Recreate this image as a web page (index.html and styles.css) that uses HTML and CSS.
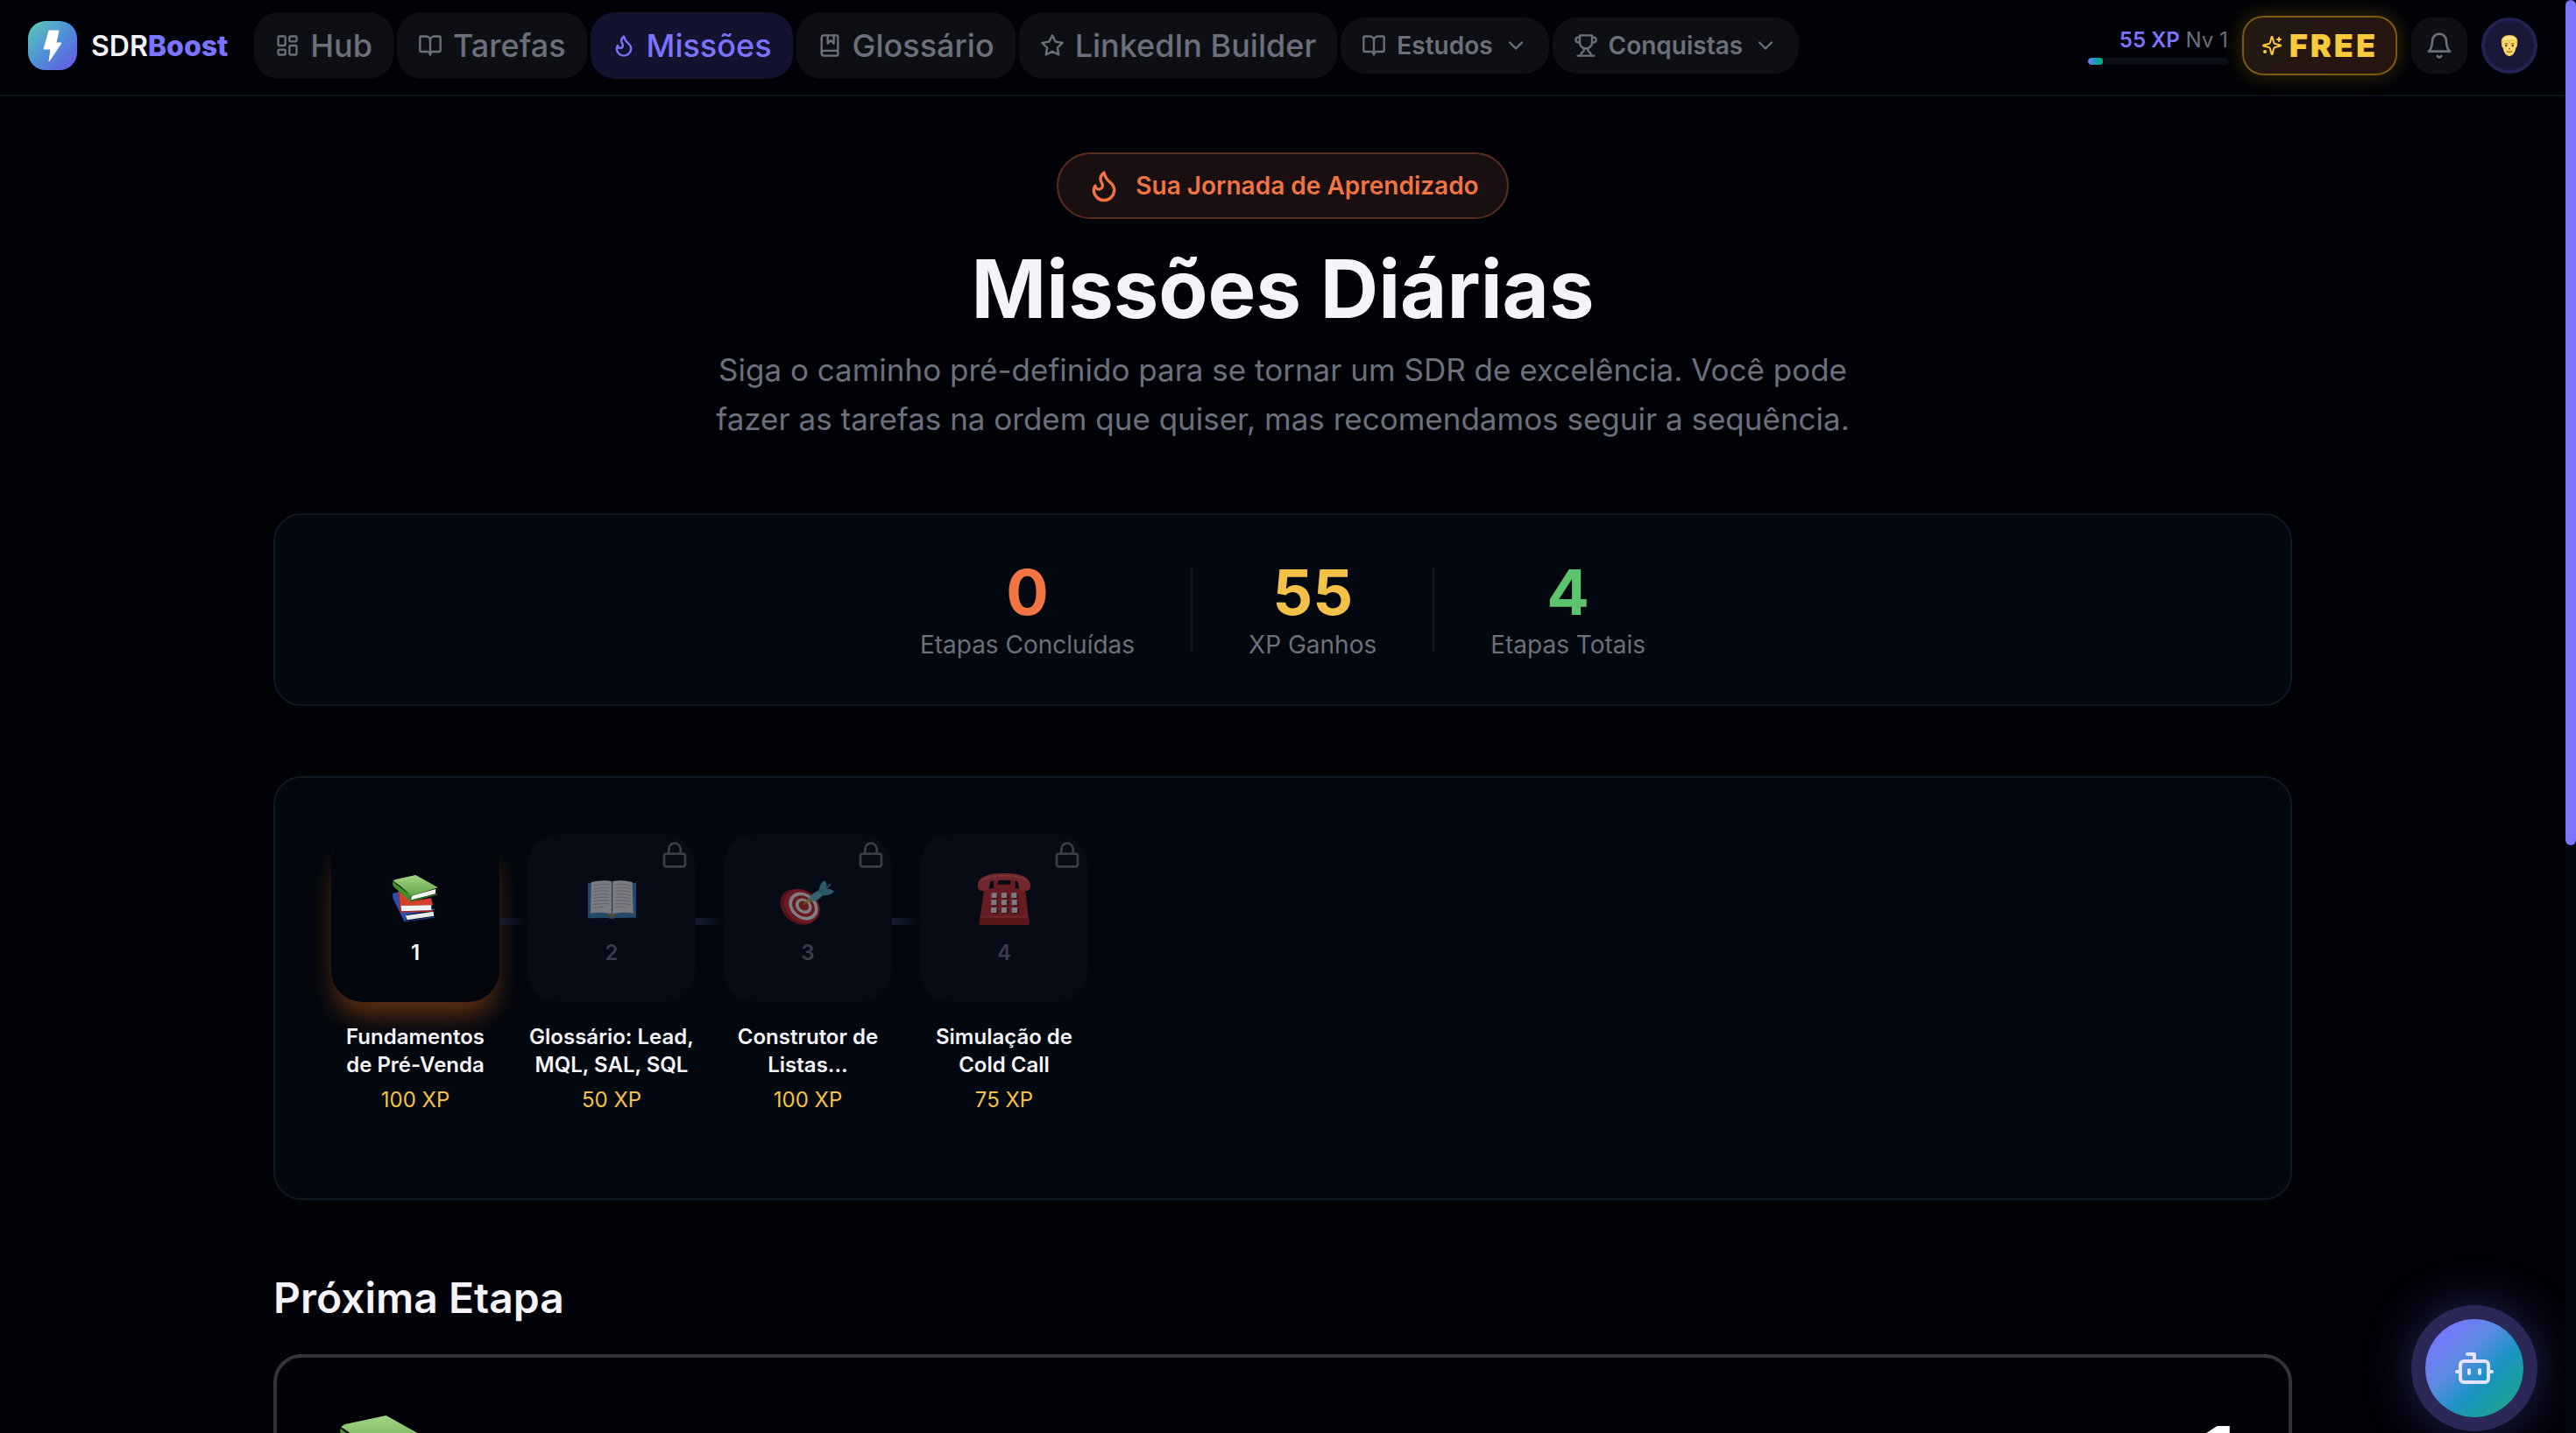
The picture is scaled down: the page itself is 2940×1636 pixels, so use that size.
FILE: index.html
```html
<!DOCTYPE html>
<html lang="pt-BR">
<head>
  <meta charset="UTF-8">
  <meta name="viewport" content="width=device-width, initial-scale=1">
  <title>SDRBoost</title>
  <link rel="stylesheet" href="styles.css">
</head>
<body>
  <!-- Shared icons -->
  <svg class="sprite" aria-hidden="true">
    <symbol id="i-book" viewBox="0 0 24 24"><path d="M12 7v14"/><path d="M3 18a1 1 0 0 1-1-1V4a1 1 0 0 1 1-1h5a4 4 0 0 1 4 4 4 4 0 0 1 4-4h5a1 1 0 0 1 1 1v13a1 1 0 0 1-1 1h-6a3 3 0 0 0-3 3 3 3 0 0 0-3-3z"/></symbol>
    <symbol id="i-flame" viewBox="0 0 24 24"><path d="M8.5 14.5A2.5 2.5 0 0 0 11 12c0-1.38-.5-2-1-3-1.072-2.143-.224-4.054 2-6 .5 2.5 2 4.9 4 6.5 2 1.6 3 3.5 3 5.5a7 7 0 1 1-14 0c0-1.153.433-2.294 1-3a2.5 2.5 0 0 0 2.5 2.5z"/></symbol>
    <symbol id="i-chevron" viewBox="0 0 24 24"><path d="m6 9 6 6 6-6"/></symbol>
    <symbol id="i-lock" viewBox="0 0 24 24"><rect x="3" y="11" width="18" height="11" rx="2"/><path d="M7 11V7a5 5 0 0 1 10 0v4"/></symbol>
    <symbol id="e-books" viewBox="432 348 180 180">
      <path fill="#2b4fb0" d="M444 421l20-6 10 62 114-5 1 4-96 17-4 25-5-3-38-76z"/>
      <path fill="#e9e9ec" d="M489 496l95-14 2 15-92 14z"/>
      <path fill="#1c3a94" d="M486 515l102-16v4l-97 14z"/>
      <path fill="#d8402c" d="M464 412l46 34 66-10 6 24-112 2z"/>
      <path fill="#f3f3f3" d="M471 462l106-2v18l-104 3z"/>
      <path fill="#b72a1f" d="M464 412l8 50 3 19 107-3v4l-112 3-6-68z"/>
      <path fill="#f4f4f4" d="M509 428l83-23-1 16-84 22z"/>
      <path fill="#3f8f2c" d="M445 379l62 48-2 21-58-52q-4-9-2-17z"/>
      <path fill="url(#greenCover)" d="M446 377q4-5 12-6l65-14 77 43-93 29q-27-31-61-52z"/>
      <path fill="#2f7420" d="M505 443l92-23 2 4-93 25z"/>
    </symbol>
    <linearGradient id="greenCover" x1="0" y1="0" x2="0" y2="1"><stop offset="0" stop-color="#a3d487"/><stop offset="1" stop-color="#5fa844"/></linearGradient>
  </svg>

  <div class="page">
    <header class="topbar">
      <a class="brand" href="#">
        <span class="brand-mark">
          <svg viewBox="0 0 56 56"><path fill="#fff" d="M24 11h11l-3 14h6L24 46l2-14h-8z" stroke="#fff" stroke-width="1" stroke-linejoin="round"/></svg>
        </span>
        <span class="brand-name">SDR<b>Boost</b></span>
      </a>

      <nav class="menu">
        <a class="menu-item" href="#"><svg class="icon" viewBox="0 0 24 24"><rect x="3" y="3" width="7" height="9" rx="1"/><rect x="14" y="3" width="7" height="5" rx="1"/><rect x="14" y="12" width="7" height="9" rx="1"/><rect x="3" y="16" width="7" height="5" rx="1"/></svg>Hub</a>
        <a class="menu-item" href="#"><svg class="icon"><use href="#i-book"/></svg>Tarefas</a>
        <a class="menu-item active" href="#"><svg class="icon"><use href="#i-flame"/></svg>Missões</a>
        <a class="menu-item" href="#"><svg class="icon" viewBox="0 0 24 24"><path d="M4 19.500v-15A2.500 2.500 0 0 1 6.500 2H19a1 1 0 0 1 1 1v18a1 1 0 0 1-1 1H6.500a1 1 0 0 1 0-5H20"/><path d="M10 2v8l3-3 3 3V2"/></svg>Glossário</a>
        <a class="menu-item" href="#"><svg class="icon" viewBox="0 0 24 24"><path d="M12 2l3.090 6.260L22 9.270l-5 4.870 1.180 6.880L12 17.770l-6.180 3.250L7 14.140 2 9.270l6.910-1.010z"/></svg>LinkedIn Builder</a>
        <button class="menu-item small" type="button"><svg class="icon"><use href="#i-book"/></svg>Estudos<svg class="icon"><use href="#i-chevron"/></svg></button>
        <button class="menu-item small" type="button"><svg class="icon" viewBox="0 0 24 24"><path d="M6 9H4.500a2.500 2.500 0 0 1 0-5H6"/><path d="M18 9h1.500a2.500 2.500 0 0 0 0-5H18"/><path d="M4 22h16"/><path d="M10 14.660V17c0 .55-.47.98-.97 1.210C7.850 18.750 7 20.240 7 22"/><path d="M14 14.660V17c0 .55.47.98.97 1.210C16.150 18.750 17 20.240 17 22"/><path d="M18 2H6v7a6 6 0 0 0 12 0V2z"/></svg>Conquistas<svg class="icon"><use href="#i-chevron"/></svg></button>
      </nav>

      <div class="user">
        <div class="level">
          <div class="level-text"><b>55 XP</b> Nv 1</div>
          <div class="level-bar"><div class="level-fill" style="width: 11%"></div></div>
        </div>
        <a class="plan" href="#">
          <svg class="icon" viewBox="0 0 24 24"><path d="M9.937 15.500A2 2 0 0 0 8.500 14.063l-6.135-1.582a.5.5 0 0 1 0-.962L8.500 9.936A2 2 0 0 0 9.937 8.500l1.582-6.135a.5.5 0 0 1 .963 0L14.063 8.500A2 2 0 0 0 15.500 9.937l6.135 1.581a.5.5 0 0 1 0 .964L15.500 14.063a2 2 0 0 0-1.437 1.437l-1.582 6.135a.5.5 0 0 1-.963 0z"/><path d="M20 3v4M22 5h-4"/><circle cx="4" cy="19" r="1"/></svg>
          FREE
        </a>
        <button class="bell" type="button" aria-label="Notificações">
          <svg class="icon" viewBox="0 0 24 24"><path d="M6 8a6 6 0 0 1 12 0c0 7 3 9 3 9H3s3-2 3-9"/><path d="M10.300 21a1.940 1.940 0 0 0 3.400 0"/></svg>
        </button>
        <button class="avatar" type="button" aria-label="Perfil">
          <svg viewBox="0 0 24 28">
            <path fill="#f2b92f" d="M2 11C1 4 6 1 12 1s11 3 10 10l-1 5H3z"/>
            <path fill="#fbd56b" d="M3 12c-1 1-.5 4 1 5 1 6 4 10 8 10s7-4 8-10c1.500-1 2-4 1-5-1-3-2-4-4-5-3 2-8 2-11 1-2 1-3 2-3 4z"/>
            <path fill="#ffe68c" d="M3 8c1-5 6-6 10-6 5 0 8 3 8 7-2-2-4-3-5-3-4 2-9 1-13 2z"/>
            <circle cx="8" cy="14" r="1.300" fill="#4a3110"/><circle cx="16" cy="14" r="1.300" fill="#4a3110"/>
            <path stroke="#9a6414" stroke-width="1.200" fill="none" d="M6 11.500h4M14 11.500h4M8.500 21q3.500 2 7 0M11 18h2"/>
          </svg>
        </button>
      </div>
    </header>

    <main class="content">
      <section class="hero">
        <div class="hero-badge"><svg class="icon"><use href="#i-flame"/></svg>Sua Jornada de Aprendizado</div>
        <h1>Missões Diárias</h1>
        <p>Siga o caminho pré-definido para se tornar um SDR de excelência. Você pode fazer as tarefas na ordem que quiser, mas recomendamos seguir a sequência.</p>
      </section>

      <section class="card stats">
        <div class="stat"><strong class="orange">0</strong><span>Etapas Concluídas</span></div>
        <div class="divider"></div>
        <div class="stat"><strong class="yellow">55</strong><span>XP Ganhos</span></div>
        <div class="divider"></div>
        <div class="stat"><strong class="green">4</strong><span>Etapas Totais</span></div>
      </section>

      <section class="card path">
        <div class="step">
          <button class="tile current" type="button">
            <svg class="emoji"><use href="#e-books"/></svg>
            <span>1</span>
          </button>
          <h3>Fundamentos de Pré-Venda</h3>
          <p>100 XP</p>
        </div>
        <div class="step">
          <button class="tile locked" type="button">
            <svg class="emoji" viewBox="1104 348 180 180">
              <path fill="#3b88bd" d="M1113 384h165v119l-70 1q-13 6-26 0l-69 1z"/>
              <path fill="#9a9a9e" d="M1118 490q40-8 77 3 37-11 75-3l-3-8h-144z"/>
              <path fill="#ececee" d="M1125 381q38-9 69-3v111q-35-8-72-2z"/>
              <path fill="#ececee" d="M1198 378q33-6 67 3l3 106q-36-6-70 2z"/>
              <path stroke="#77777d" stroke-width="3" d="M1195 380v110"/>
              <path fill="none" stroke="#8b8b92" stroke-width="2" stroke-dasharray="5 1" d="M1133 393q27-6 53-3M1133 404q27-6 53-3M1132 415q27-6 54-3M1132 426q27-6 54-3M1131 437q27-6 55-3M1131 448q27-6 55-3M1130 459q27-6 56-3M1130 470q20-4 38-3M1206 390q26-3 52 3M1206 401q26-3 52 3M1206 412q26-3 53 3M1206 423q26-3 53 3M1206 434q26-3 54 3M1206 445q26-3 54 3M1206 456q26-3 55 3M1206 467q18-2 36 1"/>
              <path fill="#a58a35" d="M1182 492h26q-2 9-13 9t-13-9z"/>
            </svg>
            <span>2</span>
            <svg class="icon lock"><use href="#i-lock"/></svg>
          </button>
          <h3>Glossário: Lead, MQL, SAL, SQL</h3>
          <p>50 XP</p>
        </div>
        <div class="step">
          <button class="tile locked" type="button">
            <svg class="emoji" viewBox="276 348 180 180">
              <g transform="rotate(38 344 466)">
                <ellipse cx="338" cy="471" rx="70" ry="55" fill="#9c1d1d"/>
                <ellipse cx="344" cy="463" rx="66" ry="53" fill="#cf2a2a"/>
                <ellipse cx="348" cy="460" rx="54" ry="43" fill="#f2f2f2"/>
                <ellipse cx="348" cy="460" rx="42" ry="33" fill="#cf2a2a"/>
                <ellipse cx="348" cy="459" rx="30" ry="24" fill="#f2f2f2"/>
                <ellipse cx="348" cy="458" rx="19" ry="15" fill="#cf2a2a"/>
              </g>
              <path stroke="#d5a623" stroke-width="5" d="M350 458l24-17"/>
              <path fill="#e0bb3a" d="M366 436l12 12-14 5z"/>
              <path fill="#65bdd1" d="M370 436q5-12 34-27l14 18q-24 22-38 22z"/>
              <path fill="#4fa9c0" d="M404 409q4-28 21-33 8 11 4 24l13-14 4 3-15 16q14-3 25 8-12 14-38 14z"/>
              <path stroke="#317d92" stroke-width="2" d="M404 417l36-25"/>
            </svg>
            <span>3</span>
            <svg class="icon lock"><use href="#i-lock"/></svg>
          </button>
          <h3>Construtor de Listas...</h3>
          <p>100 XP</p>
        </div>
        <div class="step">
          <button class="tile locked" type="button">
            <svg class="emoji" viewBox="948 348 180 180">
              <path fill="#c2302f" d="M970 403h32v-28h15v14h43v-14h16v28h34l14 120q0 4-5 4H957q-5 0-4-5z"/>
              <path fill="#d9423f" d="M948 393c0-26 26-42 90-42s90 16 90 42c0 13-5 18-17 18-13 0-20-4-23-15l-3-18q-47-8-94 0l-3 18c-3 11-10 15-23 15-12 0-17-5-17-18z"/>
              <path fill="none" stroke="#f07a72" stroke-width="3" d="M960 376q26-17 78-17t78 17"/>
              <path fill="#a82222" d="M955 500h167l3 23q0 5-5 5H957q-5 0-5-5z"/>
              <path stroke="#ea5a50" stroke-width="3" d="M957 501h163"/>
              <path fill="#871919" d="M999 422h20v17h-20zM1034 422h20v17h-20zM1068 422h20v17h-20zM998 446h20v18h-20zM1034 446h20v18h-20zM1069 446h20v18h-20zM998 472h20v18h-20zM1034 472h20v18h-20zM1070 472h20v18h-20z"/>
              <path fill="#eeeef0" d="M995 418h18v17h-18zM1029 418h18v17h-18zM1063 418h18v17h-18zM994 442h18v18h-18zM1029 442h18v18h-18zM1064 442h18v18h-18zM993 468h19v18h-19zM1029 468h18v18h-18zM1064 468h19v18h-19z"/>
            </svg>
            <span>4</span>
            <svg class="icon lock"><use href="#i-lock"/></svg>
          </button>
          <h3>Simulação de Cold Call</h3>
          <p>75 XP</p>
        </div>
      </section>

      <h2>Próxima Etapa</h2>
      <section class="next">
        <svg class="emoji big"><use href="#e-books"/></svg>
        <span class="next-number">1</span>
      </section>
    </main>
  </div>

  <button class="assistant" type="button" aria-label="Assistente">
    <svg class="icon" viewBox="0 0 24 24"><path d="M12 8V4H8"/><rect x="4" y="8" width="16" height="12" rx="2"/><path d="M2 14h2M20 14h2M15 13v2M9 13v2"/></svg>
  </button>
  <div class="scroll"><div class="scroll-thumb"></div></div>
</body>
</html>
```

FILE: styles.css
```css
* {
  box-sizing: border-box;
}
body {
  margin: 0;
  background: #010207;
  color: #f4f4fa;
  font-family: Inter, sans-serif;
  font-size: 28px;
}
h1, h2, h3, p {
  margin: 0;
}
a {
  color: inherit;
  text-decoration: none;
}
button {
  font: inherit;
  color: inherit;
  border: none;
  padding: 0;
  cursor: pointer;
}
.sprite {
  position: absolute;
  width: 0;
  height: 0;
}
.icon {
  width: 28px;
  height: 28px;
  flex: none;
  fill: none;
  stroke: currentColor;
  stroke-width: 2;
  stroke-linecap: round;
  stroke-linejoin: round;
}
.page {
  height: 100vh;
  overflow: hidden;
  padding-right: 12px;
}

/* Top bar */
.topbar {
  display: flex;
  align-items: center;
  height: 110px;
  padding: 0 32px;
  padding-bottom: 4px;
  border-bottom: 2px solid #0a101b;
}
.brand {
  display: flex;
  align-items: center;
  gap: 16px;
  margin-right: 30px;
}
.brand-mark {
  width: 56px;
  height: 56px;
  border-radius: 20px;
  background: linear-gradient(135deg, #5ccbb4, #4f8fd8 50%, #6a55e8);
}
.brand-mark svg {
  display: block;
}
.brand-name {
  font-size: 32px;
  font-weight: 600;
}
.brand-name b {
  color: #7b74ff;
  font-weight: 800;
}
.menu {
  display: flex;
  align-items: center;
  gap: 4px;
}
.menu-item {
  display: flex;
  align-items: center;
  gap: 12px;
  height: 76px;
  padding: 0 24px;
  border-radius: 28px;
  background: #0e0f14;
  color: #6b707c;
  font-size: 36px;
  font-weight: 500;
  white-space: nowrap;
}
.menu-item.small {
  height: 64px;
  font-size: 28px;
  font-weight: 600;
}
.menu-item.active {
  background: #14132f;
  color: #7b74ff;
}
.user {
  display: flex;
  align-items: center;
  gap: 16px;
  margin-left: auto;
}
.level {
  width: 160px;
}
.level-text {
  font-size: 24px;
  line-height: 32px;
  text-align: right;
  color: #6b707c;
  margin-bottom: 4px;
}
.level-text b {
  color: #7b74ff;
  font-weight: 600;
}
.level-bar {
  height: 8px;
  border-radius: 4px;
  background: #0b0f18;
  overflow: hidden;
}
.level-fill {
  height: 8px;
  border-radius: 4px;
  background: linear-gradient(90deg, #7b74ff, #00a5a5 60%, #10b070);
}
.plan {
  display: flex;
  align-items: center;
  gap: 8px;
  height: 68px;
  padding: 0 20px;
  border: 2px solid #7a5c0a;
  border-radius: 24px;
  background: linear-gradient(135deg, #221a12, #26150f);
  box-shadow: 0 0 24px rgba(234, 179, 8, 0.25);
  color: #fcc93a;
  font-size: 36px;
  font-weight: 900;
  letter-spacing: 3px;
}
.plan .icon {
  width: 24px;
  height: 24px;
}
.bell {
  display: flex;
  align-items: center;
  justify-content: center;
  width: 64px;
  height: 64px;
  border-radius: 24px;
  background: #0e0f14;
  color: #6b707c;
}
.bell .icon {
  width: 32px;
  height: 32px;
}
.avatar {
  display: flex;
  align-items: center;
  justify-content: center;
  width: 64px;
  height: 64px;
  border: 4px solid #242252;
  border-radius: 50%;
  background: #191838;
}
.avatar svg {
  width: 22px;
  height: 28px;
}

/* Page content */
.content {
  max-width: 2304px;
  margin: 0 auto;
  padding-top: 64px;
}
.hero {
  display: flex;
  flex-direction: column;
  align-items: center;
  text-align: center;
  margin-bottom: 80px;
}
.hero-badge {
  display: flex;
  align-items: center;
  gap: 16px;
  height: 76px;
  padding: 0 32px;
  border: 2px solid #5a2d1f;
  border-radius: 38px;
  background: #190e10;
  color: #f07543;
  font-weight: 600;
}
.hero-badge .icon {
  width: 40px;
  height: 40px;
}
.hero h1 {
  margin: 32px 0 16px;
  font-size: 92px;
  line-height: 96px;
  font-weight: 700;
}
.hero p {
  max-width: 1344px;
  font-size: 35px;
  line-height: 56px;
  color: #6b707c;
}
.card {
  margin-bottom: 80px;
  border: 2px solid #121724;
  border-radius: 32px;
  background: #03070f;
}
.stats {
  display: flex;
  align-items: center;
  justify-content: center;
  gap: 64px;
  padding: 48px;
}
.stat {
  text-align: center;
  line-height: 40px;
  color: #6b707c;
}
.stat strong {
  display: block;
  font-size: 72px;
  line-height: 80px;
}
.orange {
  color: #f07543;
}
.yellow {
  color: #f3c147;
}
.green {
  color: #5cc46c;
}
.divider {
  width: 2px;
  height: 96px;
  background: #121724;
}

/* Mission path */
.path {
  display: flex;
  gap: 32px;
  padding: 64px 64px 96px;
}
.step {
  width: 192px;
  text-align: center;
  font-size: 24px;
  line-height: 32px;
}
.tile {
  position: relative;
  display: flex;
  flex-direction: column;
  align-items: center;
  justify-content: center;
  gap: 16px;
  width: 192px;
  height: 192px;
  padding-top: 4px;
  margin-bottom: 24px;
  border-radius: 36px;
  background: #070b15;
  font-weight: 600;
}
.tile.current {
  background: #03060d;
  box-shadow: 0 20px 30px -6px rgba(249, 115, 22, 0.4);
  color: #fff;
}
.tile.locked {
  color: #6b707c;
}
.tile.locked > * {
  opacity: 0.5;
}
/* Line to the next tile */
.step:not(:last-child) .tile::after {
  content: "";
  position: absolute;
  left: 100%;
  top: 96px;
  width: 32px;
  height: 8px;
  background: linear-gradient(90deg, #151b2b, transparent);
}
.emoji {
  width: 60px;
  height: 60px;
  overflow: visible;
}
.lock {
  position: absolute;
  top: 8px;
  right: 8px;
  width: 32px;
  height: 32px;
}
.step h3 {
  position: relative;
  font-size: 24px;
  font-weight: 600;
  margin-bottom: 8px;
}
.step p {
  color: #f3c147;
}
h2 {
  margin-bottom: 32px;
  font-size: 48px;
  line-height: 64px;
  font-weight: 600;
}
.next {
  display: flex;
  justify-content: space-between;
  padding: 60px 64px;
  border: 4px solid #353439;
  border-radius: 32px;
}
.emoji.big {
  width: 120px;
  height: 120px;
}
.next-number {
  font-size: 72px;
  line-height: 88px;
  font-weight: 900;
  color: #fff;
}

/* Floating assistant */
.assistant {
  position: fixed;
  right: 60px;
  bottom: 18px;
  display: flex;
  align-items: center;
  justify-content: center;
  width: 112px;
  height: 112px;
  border-radius: 50%;
  background: linear-gradient(135deg, #7b74ff 10%, #5a8be0 40%, #1b94c4 60%, #1ea38c 90%);
  box-shadow: 0 0 0 16px #2b2858, 0 0 64px 8px rgba(123, 116, 255, 0.4);
  color: #e6e3ff;
}
.assistant .icon {
  width: 48px;
  height: 48px;
}
.scroll {
  position: fixed;
  top: 0;
  right: 0;
  width: 12px;
  height: 100vh;
  background: #03070f;
}
.scroll-thumb {
  height: 59%;
  border-radius: 6px;
  background: #7b74ff;
}
```
